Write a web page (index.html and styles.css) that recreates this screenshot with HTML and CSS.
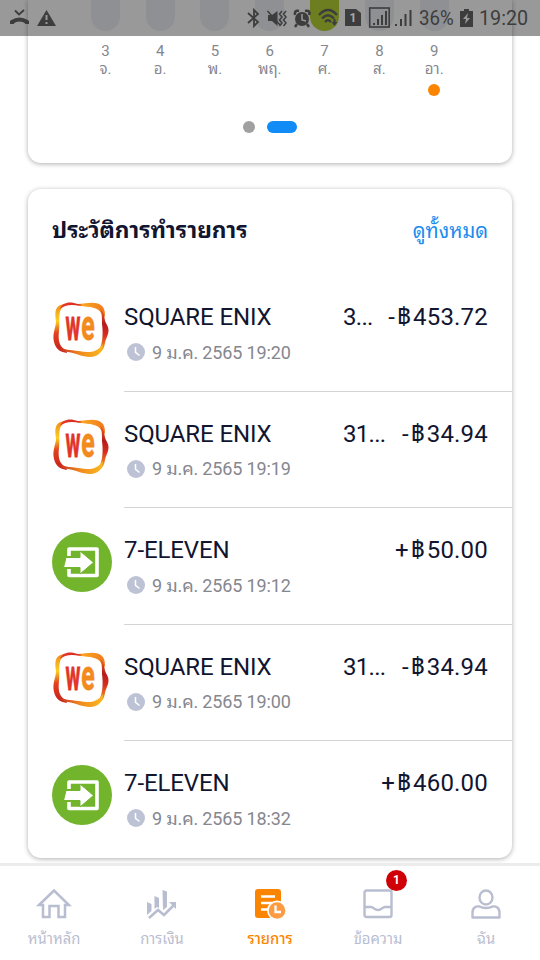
FILE: index.html
```
<!DOCTYPE html>
<html lang="th">
<head>
<meta charset="utf-8">
<title>ประวัติการทำรายการ</title>
<link rel="stylesheet" href="styles.css">
</head>
<body>
<svg class="defs" width="0" height="0">
  <defs>
    <linearGradient id="top" x1="0" y1="0" x2="1" y2="0"><stop offset="0" stop-color="#e8392a"/><stop offset=".4" stop-color="#d62b22"/><stop offset=".5" stop-color="#f9a51f"/><stop offset="1" stop-color="#f07a1e"/></linearGradient>
    <linearGradient id="right" x1="0" y1="0" x2="0" y2="1"><stop offset="0" stop-color="#ef6a1f"/><stop offset=".35" stop-color="#b51a1c"/><stop offset=".6" stop-color="#d8301f"/><stop offset="1" stop-color="#f9c21f"/></linearGradient>
    <linearGradient id="bottom" x1="0" y1="0" x2="1" y2="0"><stop offset="0" stop-color="#c4201d"/><stop offset=".5" stop-color="#f08a1e"/><stop offset="1" stop-color="#fbb91f"/></linearGradient>
    <linearGradient id="left" x1="0" y1="0" x2="0" y2="1"><stop offset="0" stop-color="#f08a1e"/><stop offset=".35" stop-color="#fbd01f"/><stop offset=".6" stop-color="#e2401f"/><stop offset="1" stop-color="#c4201d"/></linearGradient>
    <symbol id="we" viewBox="0 0 60 60">
      <path fill="url(#left)" d="M13 5C2 6 3 14 4 22C4 29 0 34 2 43C4 51 9 53 15 54L14 51C7 48 6 41 7 32C8 23 6 16 9 10Z"/>
      <path fill="url(#top)" d="M8 10C10 3 18 2 26 5C35 5 44 1 51 8C53 11 53 15 53 18L49 14C46 8 38 8 28 7C19 5 13 6 8 10Z"/>
      <path fill="url(#right)" d="M48 9C54 15 51 20 55 26C59 33 54 38 53 44C52 50 50 53 45 55L48 49C51 42 51 33 50 25C50 19 50 14 48 9Z"/>
      <path fill="url(#bottom)" d="M5 46C9 51 18 51 27 52C36 54 45 54 51 45C51 53 46 58 38 58C30 58 24 54 16 53C10 53 6 50 5 46Z"/>
      <g transform="translate(13.500 41) scale(.48 1.020)" class="we-word"><text x="0" y="0" fill="#e23428" stroke="#e23428" textLength="31" lengthAdjust="spacingAndGlyphs">w</text><text x="33" y="0" fill="#f28a1e" stroke="#f28a1e" textLength="28" lengthAdjust="spacingAndGlyphs">e</text></g>
    </symbol>
    <symbol id="pay" viewBox="0 0 60 60">
      <circle cx="30" cy="30" r="30" fill="#72b42c"/>
      <path d="M17 24V17H45V43.500H17V37" fill="none" stroke="#fff" stroke-width="3.600" stroke-linejoin="round"/>
      <path d="M14 25.500H28V19L41.500 30.500L28 42V35.500H11.500Z" fill="#fff" stroke="#72b42c" stroke-width="1"/>
    </symbol>
    <symbol id="clock" viewBox="0 0 18 18">
      <circle cx="9" cy="9" r="9" fill="#bec2d5"/><path d="M8.500 4V9.300L12.500 12.500" fill="none" stroke="#fff" stroke-width="1.500"/>
    </symbol>
  </defs>
</svg>
<div class="screen">
  <main class="content">
    <section class="card chart">
      <div class="days">
        <div class="day"><i class="bar"></i><span>3</span><span>จ.</span></div>
        <div class="day"><i class="bar"></i><span>4</span><span>อ.</span></div>
        <div class="day"><i class="bar"></i><span>5</span><span>พ.</span></div>
        <div class="day"><i class="bar"></i><span>6</span><span>พฤ.</span></div>
        <div class="day"><i class="bar active"></i><span>7</span><span>ศ.</span></div>
        <div class="day"><i class="bar"></i><span>8</span><span>ส.</span></div>
        <div class="day"><i class="bar"></i><span>9</span><span>อา.</span><i class="today"></i></div>
      </div>
      <div class="pager"><i class="dot"></i><i class="dot current"></i></div>
    </section>
    <section class="card history">
      <header class="head"><h2>ประวัติการทำรายการ</h2><a>ดูทั้งหมด</a></header>
      <article class="row"><svg class="logo"><use href="#we"/></svg><div class="body"><div class="line"><span class="name">SQUARE ENIX</span><span class="ref">3...</span><span class="amount">-<b>฿</b>453.72</span></div><div class="date"><svg><use href="#clock"/></svg><span>9 ม.ค. 2565 19:20</span></div></div></article>
      <article class="row"><svg class="logo"><use href="#we"/></svg><div class="body"><div class="line"><span class="name">SQUARE ENIX</span><span class="ref">31...</span><span class="amount">-<b>฿</b>34.94</span></div><div class="date"><svg><use href="#clock"/></svg><span>9 ม.ค. 2565 19:19</span></div></div></article>
      <article class="row"><svg class="logo"><use href="#pay"/></svg><div class="body"><div class="line"><span class="name">7-ELEVEN</span><span class="amount">+<b>฿</b>50.00</span></div><div class="date"><svg><use href="#clock"/></svg><span>9 ม.ค. 2565 19:12</span></div></div></article>
      <article class="row"><svg class="logo"><use href="#we"/></svg><div class="body"><div class="line"><span class="name">SQUARE ENIX</span><span class="ref">31...</span><span class="amount">-<b>฿</b>34.94</span></div><div class="date"><svg><use href="#clock"/></svg><span>9 ม.ค. 2565 19:00</span></div></div></article>
      <article class="row"><svg class="logo"><use href="#pay"/></svg><div class="body"><div class="line"><span class="name">7-ELEVEN</span><span class="amount">+<b>฿</b>460.00</span></div><div class="date"><svg><use href="#clock"/></svg><span>9 ม.ค. 2565 18:32</span></div></div></article>
    </section>
  </main>
  <nav class="tabs">
    <a class="tab"><svg viewBox="0 0 36 36"><path d="M3 18L18 3.500L33 18H29V30H22.500V19H13.500V30H7V18Z" fill="none" stroke="currentColor" stroke-width="2.500"/></svg><span>หน้าหลัก</span></a>
    <a class="tab"><svg viewBox="0 0 36 36"><path d="M3 15L7.500 17V24L3 28ZM10.500 9L15 11V21L13 20L10.500 22ZM18.500 3L23 4.500V20L19 23Z" fill="currentColor"/><path d="M5 31L14 23L20 28L30 18" fill="none" stroke="currentColor" stroke-width="2.500"/><path d="M25 15H32V22Z" fill="currentColor"/></svg><span>การเงิน</span></a>
    <a class="tab on"><svg viewBox="0 0 36 36"><path d="M6 2H26Q29 2 29 5V31H6Q3 31 3 28V5Q3 2 6 2Z" fill="#fb8500"/><path d="M9 9.500H23M9 16H20M9 22.500H17" stroke="#fff" stroke-width="2.500"/><circle cx="25" cy="23.500" r="10" fill="#fff"/><circle cx="25" cy="23.500" r="8.300" fill="#fd9b42"/><path d="M23.500 18.500V25H29" fill="none" stroke="#fff" stroke-width="2.300"/></svg><span>รายการ</span></a>
    <a class="tab"><svg viewBox="0 0 36 36"><rect x="4.500" y="3.500" width="27" height="26.500" rx="2" fill="none" stroke="currentColor" stroke-width="2.400"/><path d="M5 20H11C14 20 14 23 18 23S22 20 25 20H31" fill="none" stroke="currentColor" stroke-width="2.400"/></svg><span>ข้อความ</span><em class="badge">1</em></a>
    <a class="tab"><svg viewBox="0 0 36 36"><ellipse cx="18" cy="10.500" rx="6.500" ry="7" fill="none" stroke="currentColor" stroke-width="2.400"/><path d="M4.500 30.500V25.500C4.500 20.500 8 19 11.500 19.500C15 21.500 21 21.500 24.500 19.500C28 19 31.500 20.500 31.500 25.500V30.500Z" fill="none" stroke="currentColor" stroke-width="2.400" stroke-linejoin="round"/></svg><span>ฉัน</span></a>
  </nav>
  <div class="status">
    <svg class="glyphs" viewBox="0 0 415 36">
      <g fill="none" stroke="#3d3d3d" stroke-width="1.800">
        <path d="M15 10.500L19 14.500L24 10"/><path d="M12 24V22Q19.500 17 27 22V24" stroke-width="4"/>
        <path d="M248 13L258 22L254 26V10L258 14L248 23"/>
        <path d="M282 11L279.500 14L282 17L279.500 20L282 23L279.500 26M286 11L283.500 14L286 17L283.500 20L286 23L283.500 26M267.500 11L280 25" stroke-width="1.500"/>
        <path d="M319 15Q328 5 337 15M322 18.500Q328 12 334 18.500M325 22Q328 18.500 331 22" stroke-width="2.300"/>
        <rect x="369.700" y="8" width="19.500" height="19" stroke-width="1.600"/>
        <path d="M374 25V23M378 25V19M382 25V15M386 25V11M396 26V24M401 26V19M405.500 26V14M410.500 26V10" stroke-width="2"/>
      </g>
      <path d="M331.500 22H337.500L334.500 26ZM333.500 19H335.500V23H333.500Z" fill="#3d3d3d"/>
      <path d="M46.500 10L56 26H37Z" fill="#3d3d3d"/><path d="M46.500 15V20M46.500 22V24" stroke="#999" stroke-width="2"/>
      <path d="M268 15H272L277.500 11V26L272 21H268Z" fill="#3d3d3d"/>
      <circle cx="302" cy="19" r="7" fill="#3d3d3d"/><path d="M295 15Q294 10 299 11M305 11Q311 10 309 15M297 24L295 27M307 24L309 27" fill="none" stroke="#3d3d3d" stroke-width="2.500"/><path d="M302 14V20L306 21" fill="none" stroke="#999" stroke-width="1.500"/>
      <path d="M345 9H356L361 13V26H345Z" fill="#3d3d3d"/><text x="353" y="22" class="sim">1</text>
    </svg>
    <span class="pct">36%</span>
    <svg class="battery" viewBox="0 0 13 18"><path d="M4 0H9V2H13V18H0V2H4Z" fill="#3d3d3d"/><path d="M8 4L3 10H6L5 15L10 9H7Z" fill="#999"/></svg>
    <span class="time">19:20</span>
  </div>
</div>
</body>
</html>
```
FILE: styles.css
```
* { box-sizing: border-box; }
body { margin: 0; background: #fff; font-family: Roboto, "Noto Sans Thai Looped", "Noto Sans Thai", sans-serif; }
.defs { position: absolute; }
.screen { position: relative; width: 540px; height: 960px; overflow: hidden; display: flex; flex-direction: column; }
.content { height: 863px; padding: 0 28px; display: flex; flex-direction: column; gap: 26px; overflow: hidden; }
.card { background: #fff; box-shadow: 0 1px 5px rgba(0,0,0,.32); }
.chart { height: 163px; flex: none; border-radius: 0 0 13px 13px; }
.days { display: flex; padding-left: 50px; height: 121px; }
.day { width: 54.8px; display: flex; flex-direction: column; align-items: center; font-size: 15px; line-height: 18px; color: #85878f; }
.day span { height: 18px; }
.bar { width: 29px; height: 31px; margin-bottom: 11px; background: #eef0f5; border-radius: 0 0 15px 15px; flex: none; }
.bar.active { background: #b4d334; }
.today { width: 12px; height: 12px; margin-top: 6px; border-radius: 50%; background: #fb8500; }
.pager { display: flex; justify-content: center; gap: 12px; }
.dot { width: 12px; height: 12px; border-radius: 6px; background: #a0a0a0; }
.dot.current { width: 30px; background: #118bf5; }
.history { height: 669px; flex: none; border-radius: 13px; }
.head { display: flex; justify-content: space-between; align-items: center; height: 86px; padding: 0 24px 2px; line-height: 30px; }
.head h2 { margin: 0; font-size: 22.7px; color: #11152f; white-space: nowrap; }
.head a { font-size: 20.1px; color: #1b8cee; white-space: nowrap; }
.row { display: flex; height: 116.5px; padding-left: 24px; }
.logo { width: 60px; height: 60px; margin: 24px 12px 0 0; flex: none; }
.we-word { font: 700 42px Roboto, sans-serif; stroke-width: .8; }
.body { flex: 1; border-bottom: 1.5px solid #d4d4d6; padding: 27px 24px 0 0; }
.row:last-child .body { border: 0; }
.line { display: flex; height: 30px; line-height: 30px; font-size: 24px; color: #11152f; white-space: nowrap; }
.name { width: 219px; letter-spacing: -.1px; }
.ref { letter-spacing: -.7px; }
.amount { margin-left: auto; letter-spacing: .2px; }
.amount b { font-weight: 400; margin: 0 2px; }
.date { display: flex; align-items: center; gap: 7px; height: 24px; margin: 8px 0 0 3px; font-size: 18px; line-height: 24px; letter-spacing: -.15px; color: #85878f; white-space: nowrap; }
.date svg { width: 18px; height: 18px; }
.date span { padding-top: 1px; }
.tabs { height: 97px; border-top: 3px solid #ececec; display: flex; background: #fff; }
.tab { flex: 1; position: relative; display: flex; flex-direction: column; align-items: center; padding-top: 21px; color: #b9bdd0; font-size: 14.8px; line-height: 20px; }
.tab svg { width: 36px; height: 36px; margin-bottom: 6px; }
.tab.on { color: #fb8500; }
.tab.on span { font-weight: 500; }
.badge { position: absolute; left: 62px; top: 4px; width: 21px; height: 21px; border-radius: 50%; background: #cf0008; color: #fff; font: 700 12px/21px Roboto, sans-serif; text-align: center; }
.status { position: absolute; inset: 0 0 auto; height: 36px; background: rgba(0,0,0,.4); display: flex; align-items: center; color: #3d3d3d; font-size: 21px; }
.glyphs { width: 415px; height: 36px; flex: none; }
.sim { font: 700 12px Roboto, sans-serif; fill: #aaa; text-anchor: middle; }
.pct { width: 36px; margin-left: 4px; transform: scaleX(.89); transform-origin: left; }
.battery { width: 13px; height: 18px; margin-left: 5px; }
.time { margin-left: 6px; transform: scaleX(.94); transform-origin: left; }
```
